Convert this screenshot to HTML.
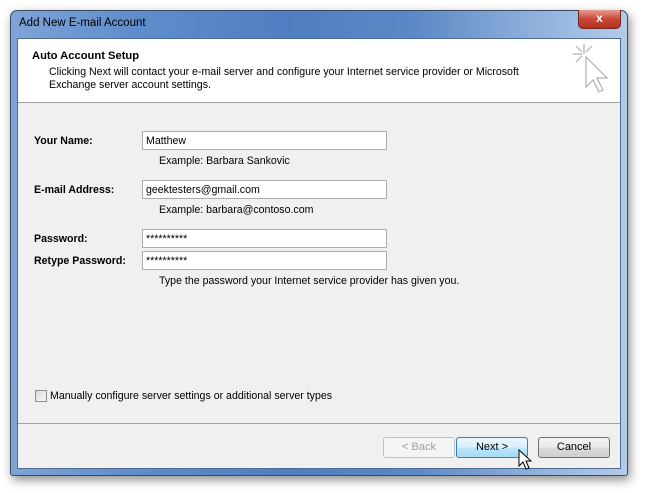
<!DOCTYPE html>
<html><head><meta charset="utf-8"><style>
*{margin:0;padding:0;box-sizing:border-box}
body{width:645px;height:493px;background:#fff;position:relative;overflow:hidden;font-family:"Liberation Sans",sans-serif;font-size:10.6px;color:#000}
.win{position:absolute;left:10px;top:10px;width:618px;height:466px;border:1px solid #3a4a63;border-radius:7px 7px 3px 3px;background:linear-gradient(90deg,#7fa4d6 0%,#5f8dcc 20%,#4f7fc2 45%,#5b88c6 65%,#8fb0dc 85%,#b4cbea 100%);box-shadow:2px 4px 10px rgba(0,0,0,.45)}
.title{position:absolute;left:8px;top:6px;font-size:11.5px;color:#000}
.close{position:absolute;right:6px;top:-1px;width:43px;height:19px;border:1px solid #6b2a22;border-top:none;border-radius:0 0 5px 5px;background:linear-gradient(#e8a093,#c8473a 50%,#b8301f);color:#fff;font-weight:bold;font-size:12px;text-align:center;line-height:17px}
.inner{position:absolute;left:6px;top:27px;width:604px;height:431px;border:1px solid #4d6b93;background:#f0f0f0}
.hdr{position:absolute;left:0;top:0;width:602px;height:64px;background:#fff;border-bottom:1px solid #a0a0a0}
.t{position:absolute;white-space:nowrap}
.b{font-weight:bold}
.in{position:absolute;left:124px;width:245px;height:19px;background:#fff;border:1px solid #abadb3;padding-left:3px;padding-top:1px;line-height:17px}
.sep{position:absolute;left:0;top:384px;width:602px;border-top:1px solid #a0a0a0}
.btn{position:absolute;top:398px;height:21px;width:72px;border:1px solid #707070;border-radius:3px;background:linear-gradient(#f2f2f2,#ebebeb 50%,#dcdcdc 51%,#cfcfcf);text-align:center;line-height:19px;font-size:11px}
</style></head><body>
<div class="win">
<div class="title">Add New E-mail Account</div>
<div class="close">x</div>
<div class="inner">
 <div class="hdr">
  <div class="t b" style="left:14px;top:11px;font-size:11.2px">Auto Account Setup</div>
  <div class="t" style="left:31px;top:27px">Clicking Next will contact your e-mail server and configure your Internet service provider or Microsoft</div>
  <div class="t" style="left:31px;top:40px">Exchange server account settings.</div>
  <svg style="position:absolute;left:554px;top:4px" width="36" height="54" viewBox="0 0 36 54"><g stroke="#b0b0b0" stroke-width="1.2" fill="none"><path d="M12 1v10M1 11h9M4 3l6 6M20 3l-6 6M4 19l6-6"/><path d="M14 14v30l7-7 6 12 4-2-6-12h10z" fill="#fff"/></g></svg>
 </div>
 <div class="t b" style="left:16px;top:96px">Your Name:</div>
 <div class="in" style="top:92px">Matthew</div>
 <div class="t" style="left:141px;top:116px">Example: Barbara Sankovic</div>
 <div class="t b" style="left:16px;top:145px">E-mail Address:</div>
 <div class="in" style="top:141px">geektesters@gmail.com</div>
 <div class="t" style="left:141px;top:165px">Example: barbara@contoso.com</div>
 <div class="t b" style="left:16px;top:194px">Password:</div>
 <div class="in" style="top:190px">**********</div>
 <div class="t b" style="left:16px;top:216px">Retype Password:</div>
 <div class="in" style="top:212px">**********</div>
 <div class="t" style="left:141px;top:236px">Type the password your Internet service provider has given you.</div>
 <div style="position:absolute;left:17px;top:351px;width:12px;height:12px;border:1px solid #8f8f8f;background:linear-gradient(135deg,#dcdcdc,#f8f8f8)"></div>
 <div class="t" style="left:32px;top:351px">Manually configure server settings or additional server types</div>
 <div class="sep"></div>
 <div class="btn" style="left:365px;border-color:#c0c0c0;background:#f4f4f4;color:#a0a0a0">&lt; Back</div>
 <div class="btn" style="left:438px;border-color:#3c7fb1;background:linear-gradient(#eaf6fd,#d9f0fc 50%,#bee6fd 51%,#a7d9f5)">Next &gt;</div>
 <div class="btn" style="left:520px">Cancel</div>
 <svg style="position:absolute;left:500px;top:410px" width="14" height="22" viewBox="0 0 14 22"><path d="M1 1v16l4-4 3 7 3-1-3-7h5z" fill="#fff" stroke="#000" stroke-width="1"/></svg>
</div>
</div>
</body></html>
